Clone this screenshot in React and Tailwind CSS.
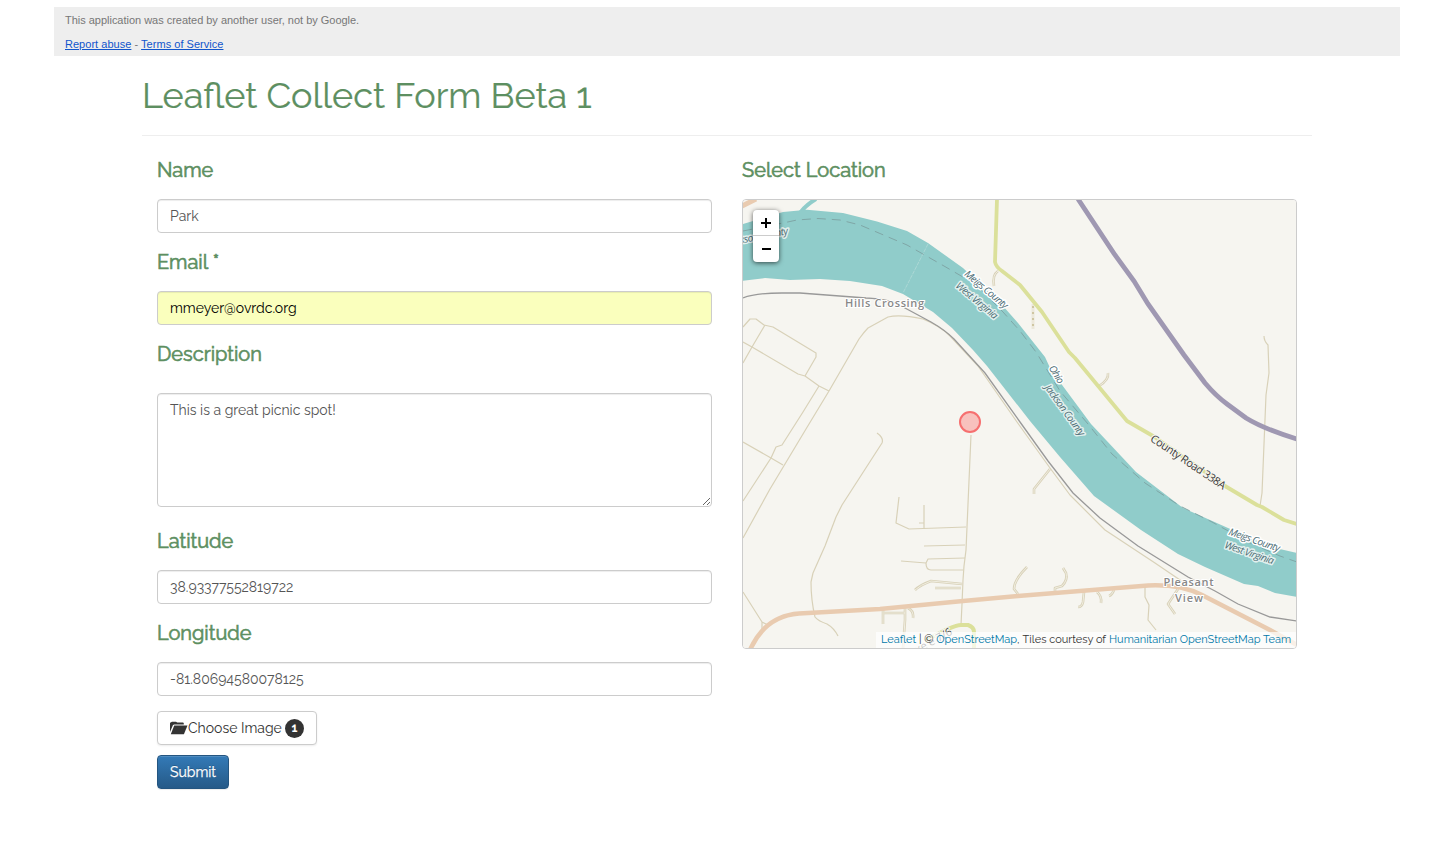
const minorRoads = [
  "M743 327 L750 319 L756 319 L760 322 L764 325 L773 327 L816 353 L816 357 L805 376",
  "M743 342 L752 347 L798 374 L805 376 L819 386 L829 391",
  "M765 325 L752 347 L743 363",
  "M819 386 L803 412 L782 445 L776 447 L771 458 L743 501",
  "M829 391 L806 429 L770 489 L743 538",
  "M743 442 L771 458 L783 465",
  "M829 391 L859 339 Q864 332 868 328 L888 317 Q900 314 923 319 Q940 326 950 336 L978 366 L1017 422 L1050 468 L1070 495 L1105 530 L1155 563 L1183 582",
  "M877 433 Q884 438 882 443 L842 505 L836 517 L825 546 L813 573 L811 582 Q811 600 815 617 Q818 621 827 624 Q834 628 838 636",
  "M971 435 L966 550 L964 566 L963 580 L962 604 L961 625",
  "M899 497 L896 523 L909 529 L966 527",
  "M924 505 V529 M919 523 H924",
  "M924 546 L965 545",
  "M901 561 L926 563 L928 559 L965 558 M926 563 Q926 570 931 570 L963 570",
  "M1264 336 Q1264 341 1268 345 L1269 373 L1266 395 L1262 493 L1260 506",
  "M743 592 L762 622 L768 625 M762 622 V630",
  "M1145 588 V597 L1149 605 L1148 620 L1156 630",
];

const drives = [
  "M915 590 Q920 585 931 581 L962 584 M935 588 L961 588",
  "M883 608 V624 M884 613 H905 M905 607 V620 L903 648 M908 608 Q914 611 913 618",
  "M1050 469 L1034 489 V494",
  "M1027 567 Q1014 580 1014 589 L1018 594",
  "M1063 568 L1066 573 Q1068 580 1062 586 L1055 588 V591",
  "M1084 592 L1083 602 Q1082 607 1078 607",
  "M1097 592 Q1102 596 1101 603",
  "M1114 590 Q1112 595 1109 596",
  "M1178 589 L1168 604 L1175 614",
  "M998 271 Q992 275 994 286",
  "M1108 373 Q1109 380 1099 386",
];

function MapLabel({ x, y, angle, children, water }) {
  return (
    <text
      x={x}
      y={y}
      transform={`rotate(${angle} ${x} ${y})`}
      textAnchor="middle"
      stroke={water ? "#e2f0ee" : "#ffffff"}
      strokeWidth="3"
      strokeLinejoin="round"
      paintOrder="stroke"
      fill="#4c6c74"
      fontSize="10"
      letterSpacing="-0.5"
      fontStyle="italic"
    >
      {children}
    </text>
  );
}

function MapDrawing() {
  return (
    <svg
      viewBox="743 200 553 448"
      className="block h-full w-full bg-[#f6f5f0] font-['Open_Sans',sans-serif] lining-nums"
      fill="none"
    >
      <path d="M798 216 Q804 206 816 199" stroke="#90ccca" strokeWidth="4" />
      <path
        d="M743 224 L783 212 L807 209.7 L843 213 L877 221.5 L907 231 L928 243 L963 268 L1003 306 L1018 323 L1045 357 L1051 370 L1091 424 L1136 472 L1183 508 L1228 528 L1271 547 L1297 553 V597 L1275 593 L1258 586 L1244 584 L1205 567 L1178 554 L1141 530 L1094 496 L1060 457 L1030 421 L987 366 L973 350 L952 328 L933 312 L903 294 L882 286 L850 281 L820 279 L790 280 L765 278 L742 281 Z"
        fill="#90ccca"
      />
      <path d="M928 244 L903 293" stroke="#b3dbd8" strokeWidth="0.8" strokeDasharray="4 1" />
      <path
        d="M743 231 L783 223 L797 220 L818 218.5 L840 220 L860 225 L907 245 L944 266 L975 284 L1003 312 L1020 331 L1036 352 L1060 391 L1088 424 L1112 454 L1145 483 L1180 506 L1212 522 L1250 543 L1280 556 L1297 562"
        stroke="#7fa6a6"
        strokeWidth="1"
        strokeDasharray="9 6"
      />
      <g stroke="#d8d1b8" strokeWidth="1.2" strokeLinejoin="round">
        {minorRoads.map((d) => (
          <path key={d} d={d} />
        ))}
      </g>
      <g stroke="#d8d1b8" strokeWidth="2.6" strokeLinejoin="round">
        {drives.map((d) => (
          <path key={d} d={d} />
        ))}
      </g>
      <g stroke="#f0ede0" strokeWidth="1" strokeLinejoin="round">
        {drives.map((d) => (
          <path key={d} d={d} />
        ))}
      </g>
      <path d="M1033 304 V329" stroke="#ece8da" strokeWidth="3" />
      <path d="M1033 306 V329" stroke="#cfc6a2" strokeWidth="2" strokeDasharray="2 4" />
      <path
        d="M743 298 Q755 293 782 293 L800 293 L866 298 Q892 299 905 308 L931 322 Q945 330 954 339 L985 373 L1020 422 L1048 461 L1073 493 L1100 518 L1138 546 L1188 577 L1215 591 L1238 604 L1270 617 L1297 621"
        stroke="#999"
        strokeWidth="1.3"
      />
      <path
        d="M997 199 L995 262 Q996 267 1002 271 L1020 285 L1042 312 L1069 352 L1075 358 L1127 421 L1153 436 L1225 486 L1257 505 L1262 507 L1284 520 L1297 524"
        stroke="#dbe09a"
        strokeWidth="3.8"
        strokeLinejoin="round"
      />
      <path d="M925 641 Q953 625 961 625 H968 Q974 627 974 632 V648" stroke="#dbe09a" strokeWidth="4" />
      <path
        d="M1078 199 L1115 255 L1134 281 L1148 304 L1184 355 L1205 383 Q1216 396 1227 404 L1246 418 Q1264 429 1297 439"
        stroke="#9f98b2"
        strokeWidth="4.8"
      />
      <path
        d="M750 650 Q765 616 799 613.5 L880 609 L963 601 L1018 596 L1148 585.5 Q1180 584 1202 595 L1270 630 L1297 645"
        stroke="#e9cbb0"
        strokeWidth="4.6"
      />
      <path d="M742 206 L756 199" stroke="#e9cbb0" strokeWidth="5" />
      <circle cx="970" cy="422" r="10" fill="#f8c1bd" stroke="#f66f6f" strokeWidth="2" />
      <MapLabel x={758.5} y={240} angle={-11} water>Jackson County</MapLabel>
      <MapLabel x={984} y={292} angle={40}>Meigs County</MapLabel>
      <MapLabel x={974.5} y={303} angle={40} water>West Virginia</MapLabel>
      <MapLabel x={1053.5} y={376} angle={58}>Ohio</MapLabel>
      <MapLabel x={1062} y={412} angle={54} water>Jackson County</MapLabel>
      <MapLabel x={1253} y={543} angle={19}>Meigs County</MapLabel>
      <MapLabel x={1248} y={556} angle={19} water>West Virginia</MapLabel>
      <text
        x="1186" y="465" transform="rotate(34 1186 465)" textAnchor="middle" fontSize="11" letterSpacing="-0.4"
        fill="#3a3a3a" stroke="#f6f5f0" strokeWidth="2" paintOrder="stroke"
      >
        County Road 338A
      </text>
      <text
        x="953" y="634" transform="rotate(-29 953 634)" textAnchor="end" fontSize="11"
        fill="#3a3a3a" stroke="#f6f5f0" strokeWidth="2" paintOrder="stroke"
      >
        xe e 7/6
      </text>
      <g fill="#888" stroke="#fff" strokeWidth="2" paintOrder="stroke" fontSize="11" fontWeight="600" textAnchor="middle">
        <text x="884.5" y="307" textLength="79">Hills Crossing</text>
        <text x="1188.5" y="586" textLength="50">Pleasant</text>
        <text x="1189" y="602" textLength="28">View</text>
      </g>
    </svg>
  );
}

function MapPanel() {
  return (
    <div className="relative h-[450px] overflow-hidden rounded border border-[#ccc]">
      <MapDrawing />
      <div className="absolute top-[10px] left-[10px] flex w-[26px] flex-col rounded bg-white shadow-[0_1px_5px_rgba(0,0,0,0.65)]">
        <button className="flex h-[26px] items-center justify-center border-b border-[#ccc]" aria-label="Zoom in">
          <svg viewBox="0 0 12 12" className="size-3 fill-black">
            <path d="M5 1h2v4h4v2H7v4H5V7H1V5h4z" />
          </svg>
        </button>
        <button className="flex h-[26px] items-center justify-center" aria-label="Zoom out">
          <svg viewBox="0 0 12 12" className="size-3 fill-black">
            <path d="M2 5h9v2h-9z" />
          </svg>
        </button>
      </div>
      <div className="absolute right-0 bottom-0 flex h-4 w-[420px] items-center justify-between bg-white/70 px-[5px] text-[11px] leading-4 whitespace-pre text-[#333]">
        <span><a className="text-[#0078a8]">Leaflet</a> | © <a className="text-[#0078a8]">OpenStreetMap</a>,</span>
        <span>Tiles courtesy of</span>
        <a className="text-[#0078a8]">Humanitarian OpenStreetMap Team</a>
      </div>
    </div>
  );
}

function Label({ children }) {
  return (
    <h4 className="h-7 text-[20px] leading-7 font-normal text-[#5d8f61] [-webkit-text-stroke:0.65px_#5d8f61]">
      {children}
    </h4>
  );
}

const inputClass =
  "block h-[34px] w-full rounded border border-[#ccc] px-3 text-[14px] shadow-[inset_0_1px_1px_rgba(0,0,0,0.075)] outline-none";

export default function App() {
  return (
    <div className="min-h-[860px] bg-white pt-[7px] pr-12 pl-[54px] font-['Raleway',Lato,sans-serif]">
      <header className="h-[49px] bg-[#eee] px-[11px] pt-px font-['Liberation_Sans',Arial,sans-serif] text-[11px] leading-6 text-[#777]">
        <p className="w-max tracking-[-0.02px]">This application was created by another user, not by Google.</p>
        <p className="tracking-[0.03px]">
          <a className="text-[#15c] underline">Report abuse</a> - <a className="text-[#15c] underline">Terms of Service</a>
        </p>
      </header>
      <main className="mx-auto w-[1170px]">
        <div className="h-20 border-b border-[#eee] pt-[19px]">
          <h1 className="text-[36px] leading-[40px] whitespace-nowrap text-[#5d8f61] [-webkit-text-stroke:0.2px_#5d8f61]">
            Leaflet Collect Form Beta 1
          </h1>
        </div>
        <div className="grid grid-cols-2 gap-[30px] px-[15px] pt-5">
          <form onSubmit={(e) => e.preventDefault()}>
            <Label>Name</Label>
            <input className={`${inputClass} mt-[15px] text-[#555]`} defaultValue="Park" />
            <div className="mt-[15px]"><Label>Email *</Label></div>
            <input className={`${inputClass} mt-[15px] bg-[#faffbd] text-black`} defaultValue="mmeyer@ovrdc.org" />
            <div className="mt-[15px]"><Label>Description</Label></div>
            <textarea
              className="mt-[25px] block h-[114px] w-full rounded border border-[#ccc] px-3 py-1.5 text-[14px] leading-5 text-[#555] shadow-[inset_0_1px_1px_rgba(0,0,0,0.075)] outline-none"
              defaultValue="This is a great picnic spot!"
            />
            <div className="mt-5"><Label>Latitude</Label></div>
            <input className={`${inputClass} mt-[15px] text-[#555]`} defaultValue="38.93377552819722" />
            <div className="mt-[15px]"><Label>Longitude</Label></div>
            <input className={`${inputClass} mt-[15px] text-[#555]`} defaultValue="-81.80694580078125" />
            <button
              type="button"
              className="mt-[15px] flex h-[34px] w-40 items-center rounded border border-[#ccc] bg-white pl-3 text-[14px] text-[#333] shadow-[0_1px_2px_rgba(0,0,0,0.075)]"
            >
              <svg viewBox="0 0 18 14" className="h-[14px] w-[18px] shrink-0 fill-[#333]">
                <path d="M0 11V2.2Q0 1.6.6 1.4L2 .8h4L7.2 1.6h5.6q1 0 1 1v.8H4.2L3 4z" />
                <path d="M4.2 4.5h13.3L14 12.9q-.2.4-.6.4H.8z" />
              </svg>
              <span className="w-[97px] text-left whitespace-nowrap">Choose Image</span>
              <span className="flex size-[19px] items-center justify-center rounded-full bg-[#333] text-[12px] leading-none font-bold text-white">1</span>
            </button>
            <button className="mt-[10px] block h-[34px] w-[72px] rounded border border-[#245580] bg-linear-to-b from-[#337ab7] to-[#265a88] text-[14px] text-white shadow-[inset_0_1px_0_rgba(255,255,255,0.15),0_1px_1px_rgba(0,0,0,0.075)] [-webkit-text-stroke:0.25px_white] [text-shadow:0_-1px_0_rgba(0,0,0,0.2)]">
              Submit
            </button>
          </form>
          <section>
            <Label>Select Location</Label>
            <div className="mt-[15px]"><MapPanel /></div>
          </section>
        </div>
      </main>
    </div>
  );
}
